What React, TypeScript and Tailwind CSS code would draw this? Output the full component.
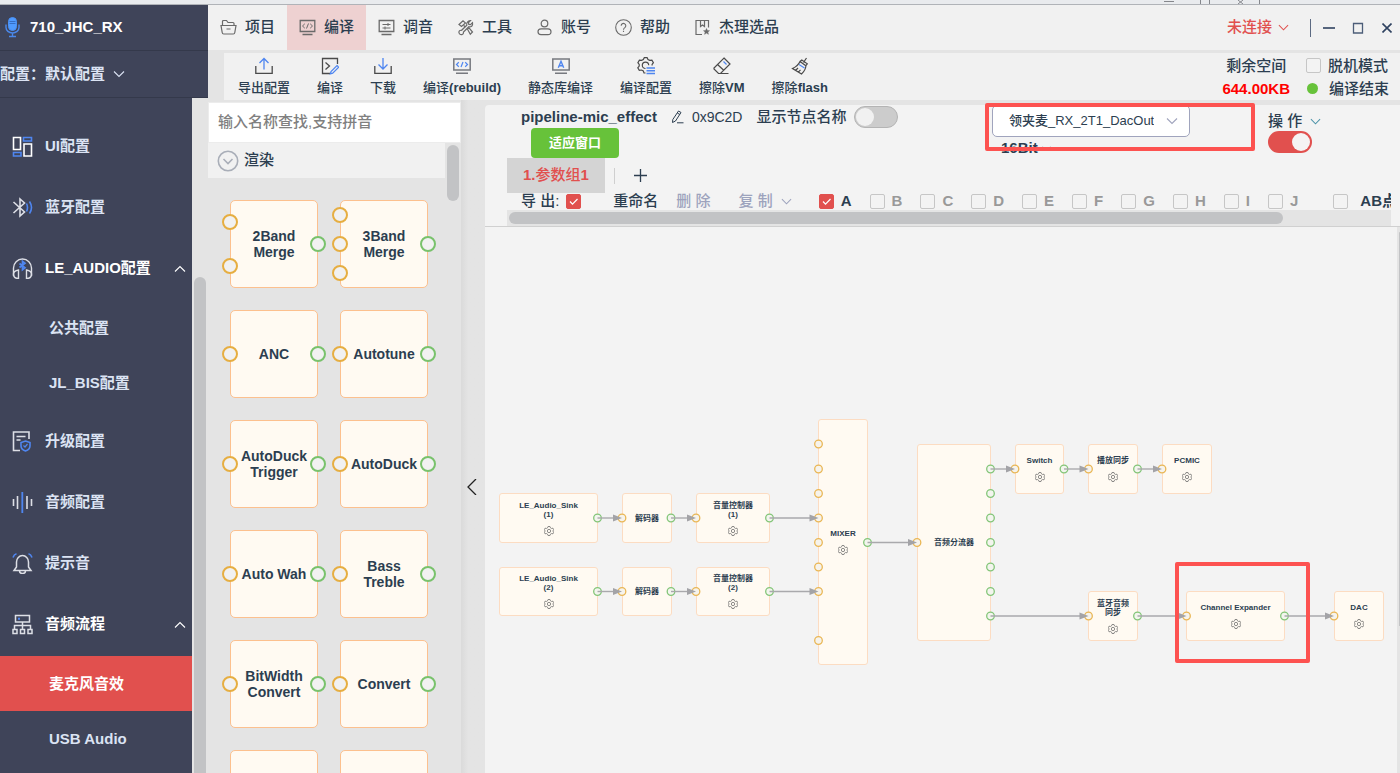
import React from "react";

type IconProps = { className?: string };

function Icon({ className = "", box = "0 0 24 24", children }: { className?: string; box?: string; children: React.ReactNode }) {
  return (
    <svg viewBox={box} className={`shrink-0 ${className}`} fill="none" stroke="currentColor" strokeWidth="1.6" aria-hidden="true">
      {children}
    </svg>
  );
}

const BLUE = "#4f86f0";

const Chevron = ({ className = "" }: IconProps) => (
  <Icon className={className} box="0 0 12 12">
    <path d="M1 3.5 6 8.5 11 3.5" strokeWidth="1.1" />
  </Icon>
);

/* Title and sidebar icons */
const MicIcon = () => (
  <Icon className="h-[21px] w-[15px]" box="0 0 15 21">
    <rect x="3.5" y="0.5" width="8" height="13" rx="4" fill="#4f9bff" stroke="#4a90f5" strokeWidth="1" />
    <path d="M4.5 4.500h6M4.500 6.500h6" stroke="#2f62b8" strokeWidth="0.800" />
    <path d="M1 7.500v3a6.500 5.500 0 0 0 13 0v-3M7.500 16v3M4 19.500h7" stroke="#4a88ea" strokeWidth="1.400" />
  </Icon>
);
const LayoutIcon = () => (
  <Icon className="size-[21px]" box="0 0 21 21">
    <path d="M1.500 1.500h7v12h-7zM12 8h7.500v12H12z" stroke="#fff" />
    <path d="M11.500 1.500h8v3.500h-8zM1.500 16.500h7.500V20H1.500z" stroke={BLUE} />
  </Icon>
);
const BluetoothIcon = () => (
  <Icon className="size-[21px]" box="0 0 21 21">
    <path d="M1.500 5 12.500 15 8 19V2l4.500 4L1.500 16" />
    <path d="M14.500 6.500q2 4 0 8M17.500 4.500q4 6 0 12" stroke={BLUE} />
  </Icon>
);
const HeadsetIcon = () => (
  <Icon className="size-[21px]" box="0 0 21 21">
    <path d="M1.500 18V10a9 9 0 0 1 18 0v8" strokeWidth="1.400" />
    <path d="M6.500 12v8.500C3 20.500 1.500 18.500 1.500 16S3.500 12.500 6.500 12zM14.500 12v8.500c3.500 0 5-2 5-4.500s-2-3.500-5-4z" strokeWidth="1.400" />
    <path d="M7.500 5.500 13 9.800l-2.500 2V3.200l2.500 2L7.500 9.500" stroke={BLUE} strokeWidth="1.700" />
  </Icon>
);
const UpgradeIcon = () => (
  <Icon className="size-[21px]" box="0 0 21 21">
    <path d="M8 19.500H1.500V1H17v7M4.500 5.500h9M4.500 9h4" />
    <path d="m13.500 10 4.500 1.500V15c0 2.500-1.800 4-4.500 5-2.700-1-4.500-2.500-4.500-5v-3.500z" stroke={BLUE} />
    <path d="m11.500 14.500 1.500 1.500 2.500-3" stroke={BLUE} strokeWidth="1.200" />
  </Icon>
);
const WaveIcon = () => (
  <Icon className="size-[21px]" box="0 0 21 21">
    <path d="M1.500 7v7M5.500 4v13M15 4v13M19.500 7v7" />
    <path d="M10.300 0v21" stroke={BLUE} strokeWidth="1.800" />
  </Icon>
);
const BellIcon = () => (
  <Icon className="size-[21px]" box="0 0 21 21">
    <path d="M2 17.500h17l-2.500-3.500V9a6 6.500 0 0 0-12 0v5zM7.500 18a3 2.500 0 0 0 6 0" strokeWidth="1.500" />
    <path d="M1 4.500Q2 1.500 4.500.8M20 4.500Q19 1.500 16.500.8" stroke={BLUE} />
  </Icon>
);
const FlowIcon = () => (
  <Icon className="size-[21px]" box="0 0 21 21">
    <path d="M3.500 1.500h14v6.500h-14zM10.500 8v7M2.500 15v-3.500h16V15" strokeWidth="1.500" />
    <path d="M1 15.500h4v4H1zM8.500 15.500h4v4h-4zM16 15.500h4v4h-4z" strokeWidth="1.500" />
    <path d="M6 4.700h2" stroke={BLUE} strokeWidth="2" />
  </Icon>
);

/* Menu icons */
const FolderIcon = () => (
  <Icon className="size-[17px]" box="0 0 17 17">
    <path d="M2.500 6.500v-4q0-1 1-1h3l1.500 2h5q1 0 1 1v2M1 6.500h15l-1.200 7q-.2 1.500-1.500 1.500H3.700q-1.300 0-1.500-1.500zM6.500 10h4" strokeWidth="1.200" />
  </Icon>
);
const CodeScreenIcon = () => (
  <Icon className="size-[17px]" box="0 0 17 17">
    <path d="M1.200 1.500h14.600v11H1.200zM3.500 15.500h10" strokeWidth="1.300" />
    <path d="M5.800 4.800 3.500 7l2.300 2.200M11.200 4.800 13.500 7l-2.300 2.200M9.500 4.500 7.500 9.500" strokeWidth="1" />
  </Icon>
);
const TuneIcon = () => (
  <Icon className="size-[17px]" box="0 0 17 17">
    <path d="M1.200 1.500h14.600v11H1.200zM3.500 15.500h10" strokeWidth="1.300" />
    <path d="M4.500 5.500h8M10 4v3M4.500 9h8M7 7.500v3" strokeWidth="1" />
  </Icon>
);
const ToolsIcon = () => (
  <Icon className="size-[17px]" box="0 0 17 17">
    <path d="M2 5.500 6 1.800 8.500 4 4.500 7.500zM6.800 6.500l1.500 1.700M10.500 10.200l1.500-1.400 3.500 4.200-2.200 2.200z" strokeWidth="1.200" />
    <path d="m13.500 1.700-2 2 .3 1.700 1.700.3 2-2q.5 2.300-.8 3.600-1.300 1-2.900.5l-5.300 5.200q.2 2-1.200 2.500t-2.800-.6q-1-1.300-.4-2.600.7-1.200 2.500-1L9.800 6.200q-.500-1.700.6-3 1.300-1.700 3.100-1.500z" strokeWidth="1.200" />
  </Icon>
);
const UserIcon = () => (
  <Icon className="size-[17px]" box="0 0 17 17">
    <circle cx="8.500" cy="4.500" r="3.300" strokeWidth="1.200" />
    <path d="M5 9.800h7q3 0 3 2.900t-3 2.900H5q-3 0-3-2.900t3-2.900z" strokeWidth="1.200" />
  </Icon>
);
const HelpIcon = () => (
  <Icon className="size-[17px]" box="0 0 17 17">
    <circle cx="8.500" cy="8.500" r="7.800" strokeWidth="1.100" />
    <path d="M6.200 6.800a2.300 2.300 0 1 1 3.600 1.800q-1.300.8-1.300 2.200M8.500 11.800v1.300" strokeWidth="1.100" />
  </Icon>
);
const BookmarkIcon = () => (
  <Icon className="size-[17px]" box="0 0 17 17">
    <path d="M8 15.500H2V1.500h12.500v7M6.500 1.500v6L8.500 6l2 1.500v-6" strokeWidth="1.200" />
    <path d="m12.500 9.500.9 2 2.100.2-1.600 1.400.5 2.200-1.900-1.200-1.900 1.200.5-2.200-1.600-1.400 2.100-.2z" fill="currentColor" strokeWidth="0.500" />
  </Icon>
);

/* Toolbar icons */
const UploadIcon = () => (
  <Icon className="size-[18px]" box="0 0 18 18">
    <path d="M.800 9v7.300h16.400V9" strokeWidth="1.300" />
    <path d="M9 12.500V1.500M4.500 6 9 1.500 13.500 6" stroke={BLUE} strokeWidth="1.300" />
  </Icon>
);
const DownloadIcon = () => (
  <Icon className="size-[18px]" box="0 0 18 18">
    <path d="M.800 9v7.300h16.400V9" strokeWidth="1.300" />
    <path d="M9 1v11M4.500 7.500 9 12l4.500-4.500" stroke={BLUE} strokeWidth="1.300" />
  </Icon>
);
const CompileIcon = () => (
  <Icon className="size-[18px]" box="0 0 18 18">
    <path d="M9 16.500H1.500v-15h15V7M4.500 5.500l4 3.500-4 3.500" strokeWidth="1.300" />
    <path d="m16 8.500 1.700 1.700-6 6-2.400.7.700-2.400z" stroke={BLUE} strokeWidth="1.200" />
  </Icon>
);
const RebuildIcon = () => (
  <Icon className="size-[18px]" box="0 0 18 18">
    <path d="M.800 2h16.400v11H.800zM3 16.300h12" stroke="#77797f" strokeWidth="1.500" />
    <path d="M5.800 5.300 3.500 7.500l2.300 2.200M12.200 5.300l2.300 2.200-2.300 2.200M10 5 8 10" stroke={BLUE} strokeWidth="1.200" />
  </Icon>
);
const StaticLibIcon = () => (
  <Icon className="size-[18px]" box="0 0 18 18">
    <path d="M.800 2h16.400v11H.800zM3 16.300h12" stroke="#77797f" strokeWidth="1.500" />
    <path d="M6.300 10.700 9 4.300l2.700 6.400M7.200 8.700h3.600" stroke={BLUE} strokeWidth="1.400" />
  </Icon>
);
const GearListIcon = () => (
  <Icon className="size-[18px]" box="0 0 18 18">
    <path d="M8.500 16H7l-.7-2-1.800-1-2.200.3-1.500-2.500L2.200 9V7.500L.900 5.700l1.500-2.500 2.200.2L6.300 2.500 7.300.7h2.800l.9 1.800 1.700.9 2.200-.2 1.500 2.500-1.300 1.800v1" strokeWidth="1.200" />
    <path d="M8.500 11.500a3.200 3.200 0 1 1 3.200-3.200" strokeWidth="1.200" />
    <path d="M9.500 11h8.500M9.500 13.700h8.500M9.500 16.400h8.500" stroke={BLUE} strokeWidth="1.500" />
  </Icon>
);
const EraserIcon = () => (
  <Icon className="size-[18px]" box="0 0 18 18">
    <path d="M11 1 17 7 7.500 16.500H5.500L1 12V11zM4.500 7.500l6.500 6M6.500 16.500h9" strokeWidth="1.200" />
    <path d="m10.500 4.500 3 3" stroke={BLUE} strokeWidth="1.200" />
  </Icon>
);
const BroomIcon = () => (
  <Icon className="size-[18px]" box="0 0 18 18">
    <path d="M12.500 5.500 15.500 1M9 4.500l5.500 4M9 4.500Q7 9 1.500 11.500L10.500 17q4-3.500 4.500-8.500l1.300-1.700-5.500-3.700zM4.500 13.500 7 11M7.300 15.200 9.500 12.800" strokeWidth="1.200" />
    <path d="m8 7.500 5.500 3.500" stroke={BLUE} strokeWidth="1.200" />
  </Icon>
);
const PencilIcon = () => (
  <Icon className="h-[14px] w-[13px]" box="0 0 13 14">
    <path d="M7.500 1 10 2.500 4.500 11 1.500 12.500l.300-3zM6.300 3 8.800 4.500M6 12.800h6.500" strokeWidth="1" />
  </Icon>
);
const GearIcon = () => (
  <Icon className="size-[10px] text-[#6b6b6b]" box="0 0 20 20">
    <path d="M8 1h4l1 2.800 2 1.100 3-.5 1.500 3.200L17.500 10l2 2.400L18 15.600l-3-.5-2 1.100L12 19H8l-1-2.800-2-1.100-3 .5L.500 12.400l2-2.400-2-2.400L2 4.400l3 .5 2-1.100z" strokeWidth="1.500" />
    <circle cx="10" cy="10" r="3.300" strokeWidth="1.500" />
  </Icon>
);

const menus = [
  { label: "项目", icon: <FolderIcon /> },
  { label: "编译", icon: <CodeScreenIcon />, active: true },
  { label: "调音", icon: <TuneIcon /> },
  { label: "工具", icon: <ToolsIcon /> },
  { label: "账号", icon: <UserIcon /> },
  { label: "帮助", icon: <HelpIcon /> },
  { label: "杰理选品", icon: <BookmarkIcon /> },
];

const tools = [
  { label: "导出配置", icon: <UploadIcon /> },
  { label: "编译", icon: <CompileIcon /> },
  { label: "下载", icon: <DownloadIcon /> },
  { label: "编译", suffix: "(rebuild)", icon: <RebuildIcon /> },
  { label: "静态库编译", icon: <StaticLibIcon /> },
  { label: "编译配置", icon: <GearListIcon /> },
  { label: "擦除", suffix: "VM", icon: <EraserIcon /> },
  { label: "擦除", suffix: "flash", icon: <BroomIcon /> },
];

type NavEntry = { label: string; icon: React.ReactNode; children?: string[] };
const nav: NavEntry[] = [
  { label: "UI配置", icon: <LayoutIcon /> },
  { label: "蓝牙配置", icon: <BluetoothIcon /> },
  { label: "LE_AUDIO配置", icon: <HeadsetIcon />, children: ["公共配置", "JL_BIS配置"] },
  { label: "升级配置", icon: <UpgradeIcon /> },
  { label: "音频配置", icon: <WaveIcon /> },
  { label: "提示音", icon: <BellIcon /> },
  { label: "音频流程", icon: <FlowIcon />, children: ["麦克风音效", "USB Audio"] },
];
const activeNav = "麦克风音效";

/* Library blocks: vertical position of each input port, in pixels from the top of the card */
const blocks = [
  { name: "2Band Merge", inputs: [22, 66] },
  { name: "3Band Merge", inputs: [15, 44, 73] },
  { name: "ANC", inputs: [44] },
  { name: "Autotune", inputs: [44] },
  { name: "AutoDuck Trigger", inputs: [44] },
  { name: "AutoDuck", inputs: [44] },
  { name: "Auto Wah", inputs: [44] },
  { name: "Bass Treble", inputs: [44] },
  { name: "BitWidth Convert", inputs: [44] },
  { name: "Convert", inputs: [44] },
  { name: "", inputs: [44] },
  { name: "", inputs: [44] },
];

/* Canvas: positions are relative to the top left corner of the canvas */
type FlowNode = { lines: string[]; x: number; y: number; w: number; h: number; gear?: boolean };
const flowNodes: FlowNode[] = [
  { lines: ["LE_Audio_Sink", "(1)"], x: 14, y: 266, w: 99, h: 50, gear: true },
  { lines: ["解码器"], x: 137, y: 266, w: 50, h: 50 },
  { lines: ["音量控制器", "(1)"], x: 211, y: 266, w: 74, h: 50, gear: true },
  { lines: ["LE_Audio_Sink", "(2)"], x: 14, y: 340, w: 99, h: 49, gear: true },
  { lines: ["解码器"], x: 137, y: 340, w: 50, h: 49 },
  { lines: ["音量控制器", "(2)"], x: 211, y: 340, w: 74, h: 49, gear: true },
  { lines: ["MIXER"], x: 333, y: 192, w: 50, h: 246, gear: true },
  { lines: ["音频分流器"], x: 432, y: 217, w: 74, h: 197 },
  { lines: ["Switch"], x: 530, y: 217, w: 49, h: 50, gear: true },
  { lines: ["播放同步"], x: 603, y: 217, w: 50, h: 50, gear: true },
  { lines: ["PCMIC"], x: 677, y: 217, w: 50, h: 50, gear: true },
  { lines: ["蓝牙音频", "同步"], x: 603, y: 364, w: 50, h: 50, gear: true },
  { lines: ["Channel Expander"], x: 701, y: 364, w: 99, h: 50, gear: true },
  { lines: ["DAC"], x: 849, y: 364, w: 50, h: 50, gear: true },
];
const inPorts = [
  [137, 291], [211, 291], [137, 364.500], [211, 364.500],
  [333.500, 217], [333.500, 242], [333.500, 266.500], [333.500, 291], [333.500, 315.500], [333.500, 340], [333.500, 364.500], [333.500, 413.500],
  [432, 315.500], [530, 242], [603.500, 242], [677, 242], [603.500, 389], [701.500, 389], [849, 389],
];
const outPorts = [
  [112.500, 291], [186, 291], [284.500, 291], [112.500, 364.500], [186, 364.500], [284.500, 364.500], [382.500, 315.500],
  [505.500, 242], [505.500, 266.500], [505.500, 291], [505.500, 315.500], [505.500, 340], [505.500, 364.500], [505.500, 389],
  [579, 242], [652.500, 242], [652.500, 389], [799.500, 389],
];
const wires = [
  [112.500, 137, 291], [186, 211, 291], [284.500, 333.500, 291],
  [112.500, 137, 364.500], [186, 211, 364.500], [284.500, 333.500, 364.500],
  [382.500, 432, 315.500], [505.500, 530, 242], [579, 603.500, 242], [652.500, 677, 242],
  [505.500, 603.500, 389], [652.500, 701.500, 389], [799.500, 849, 389],
];

function CheckBox({ label, checked, muted, hideLabel, wide }: { label: string; checked?: boolean; muted?: boolean; hideLabel?: boolean; wide?: boolean }) {
  return (
    <label className={`flex shrink-0 items-center whitespace-nowrap ${wide ? "gap-3" : "gap-[7px]"} ${muted ? "text-[#999999]" : ""}`}>
      <span className="relative block size-[15px]">
        <input
          type="checkbox"
          defaultChecked={checked}
          aria-label={label}
          className="peer block size-[15px] appearance-none rounded-xs border border-[#c6c6c6] bg-[#f3f3f3] checked:border-[#e1504e] checked:bg-[#e1504e]"
        />
        <svg viewBox="0 0 15 15" className="pointer-events-none absolute inset-0 hidden peer-checked:block" fill="none" stroke="#fff" strokeWidth="1.200">
          <path d="m4 7.500 2.500 2.700L11.500 5" />
        </svg>
      </span>
      {!hideLabel && <span>{label}</span>}
    </label>
  );
}

function Sidebar() {
  return (
    <aside className="flex w-[208px] shrink-0 flex-col">
      <div className="flex h-[46px] shrink-0 items-center gap-[10px] border-b border-[#34394b] bg-[#3f4459] pl-[5px] text-[15px] font-bold text-white">
        <MicIcon />
        710_JHC_RX
      </div>
      <button className="flex h-[47px] shrink-0 items-center border-b border-[#34394b] bg-[#3f4459] text-[15px] font-bold text-[#dbe3f3]">
        <span>配置：</span>
        <span className="pr-2">默认配置</span>
        <Chevron className="size-3" />
      </button>
      <div className="flex min-h-0 flex-1">
        <nav className="min-w-0 flex-1 overflow-hidden bg-[#3f4459] pt-[18px] text-[15px] font-bold text-[#dbe3f3]">
          {nav.map((entry) => (
            <div key={entry.label}>
              <a href="#" className={`flex h-[61px] items-center gap-3 pr-[6px] pl-3 ${entry.children ? "text-white" : ""}`}>
                <span className="text-[#dddfe6]">{entry.icon}</span>
                <span className="flex-1">{entry.label}</span>
                {entry.children && <Chevron className="size-3 rotate-180" />}
              </a>
              {entry.children && (
                <div className="py-px">
                  {entry.children.map((child) => (
                    <a
                      key={child}
                      href="#"
                      className={`flex h-[55px] items-center pt-px pl-[49px] ${child === activeNav ? "bg-[#e1504e] text-white" : ""}`}
                    >
                      {child}
                    </a>
                  ))}
                </div>
              )}
            </div>
          ))}
        </nav>
        <div className="flex w-4 flex-col px-[2px] pt-[179px]">
          <div className="flex-1 rounded-t-full bg-[#c2c3c5]" />
        </div>
      </div>
    </aside>
  );
}

function MenuBar() {
  return (
    <header className="flex h-[45px] shrink-0 items-stretch bg-[#f1f1f1] text-[15px] font-medium">
      {menus.map((m) => (
        <button key={m.label} className={`flex items-center gap-2 px-3 whitespace-nowrap ${m.active ? "bg-[#eed1d1]" : ""}`}>
          <span className="text-[#6a6a6a]">{m.icon}</span>
          {m.label}
        </button>
      ))}
      <div className="ml-auto flex items-center pr-2">
        <button className="flex items-center gap-[6px] pr-[21px] text-[#e1504e]">
          未连接
          <Chevron className="size-[11px]" />
        </button>
        <span className="h-[18px] w-px bg-[#5c6a82]" />
        <button aria-label="最小化" className="pl-3">
          <Icon className="size-3" box="0 0 12 12"><path d="M0 6h12" stroke="#2f4260" /></Icon>
        </button>
        <button aria-label="最大化" className="pl-[17px]">
          <Icon className="size-3" box="0 0 12 12"><path d="M1.500 1.500h9v9.500h-9z" stroke="#4c5d78" strokeWidth="1.300" /></Icon>
        </button>
        <button aria-label="关闭" className="pl-[18px]">
          <Icon className="size-[10px]" box="0 0 10 10"><path d="m.500.500 9 9M9.500.500l-9 9" stroke="#2f4260" /></Icon>
        </button>
      </div>
    </header>
  );
}

function Toolbar() {
  return (
    <div className="mt-[3px] ml-4 flex h-[47px] shrink-0 items-center bg-[#f1f1f1] pr-[11px] pl-[14px] font-medium">
      <div className="flex gap-[27px] text-[13px] leading-5">
        {tools.map((t) => (
          <button key={t.label + (t.suffix ?? "")} className="flex flex-col items-center gap-[3px] pt-px whitespace-nowrap">
            <span className="text-[#4a4a4a]">{t.icon}</span>
            <span>
              {t.label}
              {t.suffix && <b>{t.suffix}</b>}
            </span>
          </button>
        ))}
      </div>
      <div className="ml-auto flex gap-4 text-[15px] leading-[23px]">
        <div className="flex flex-col items-center">
          <span>剩余空间</span>
          <span className="font-bold text-[#ff0000]">644.00KB</span>
        </div>
        <div className="flex flex-col">
          <CheckBox label="脱机模式" />
          <div className="flex items-center gap-[11px] pl-px">
            <span className="size-[11px] rounded-full bg-[#67c23a]" />
            编译结束
          </div>
        </div>
      </div>
    </div>
  );
}

function Library() {
  return (
    <section className="flex w-[253px] shrink-0 flex-col pt-[2px]">
      <input
        type="text"
        aria-label="查找节点"
        placeholder="输入名称查找,支持拼音"
        className="h-[41px] w-full shrink-0 border border-[#ececec] bg-white px-[9px] pb-[2px] text-[15px] font-medium placeholder:text-[#808080] placeholder:opacity-100"
      />
      <div className="flex min-h-0 flex-1">
        <div className="min-w-0 flex-1 overflow-hidden">
          <button className="flex h-[35px] w-full items-center gap-[5px] bg-[#f1f1f1] pl-[9px] text-[15px] font-medium">
            <Icon className="size-[22px] text-[#a9aeb8]" box="0 0 22 22">
              <circle cx="11" cy="11" r="9.700" />
              <path d="M6.500 9 11 13.500 15.500 9" />
            </Icon>
            渲染
          </button>
          <div className="grid grid-cols-[88px_88px] gap-[22px] py-[22px] pl-[22px]">
            {blocks.map((b, i) => (
              <button
                key={i}
                className="relative flex h-[88px] items-center justify-center rounded-[5px] border border-[#fcc08e] bg-[#fffaf2] px-2 text-center text-sm leading-4 font-bold"
              >
                {b.name}
                {b.inputs.map((y) => (
                  <span key={y} style={{ top: y - 9 }} className="absolute -left-[9px] size-4 rounded-full border-2 border-[#e6ae41] bg-[#f1f1f1]" />
                ))}
                <span className="absolute top-[35px] -right-[9px] size-4 rounded-full border-2 border-[#79c26c] bg-[#f1f1f1]" />
              </button>
            ))}
          </div>
        </div>
        <div className="w-4 px-[2px] pt-[2px]">
          <div className="h-14 rounded-full bg-[#c2c3c5]" />
        </div>
      </div>
    </section>
  );
}

function PipelineHeader() {
  return (
    <div className="shrink-0 overflow-hidden border-b border-[#d0d0d0] pr-[9px] pl-[22px] text-[15px] font-medium">
      <div className="flex h-[53px] items-start pl-[14px]">
        <div className="flex-1">
          <div className="flex h-[23px] items-center pt-px whitespace-nowrap">
            <span className="font-bold">pipeline-mic_effect</span>
            <button aria-label="重命名" className="pl-[14px]"><PencilIcon /></button>
            <span className="pl-2 text-sm">0x9C2D</span>
            <label className="flex items-center gap-2 pl-[14px]">
              显示节点名称
              <input
                type="checkbox"
                className="relative h-[22px] w-11 appearance-none rounded-full border border-[#b4b4b4] bg-[#cccccc] before:absolute before:top-px before:left-px before:size-[18px] before:rounded-full before:bg-[#f1f1f1]"
              />
            </label>
          </div>
          <button className="ml-[10px] h-[30px] rounded-sm bg-[#67c23a] px-[18px] text-[13px] font-bold text-white">适应窗口</button>
        </div>
        <div className="relative h-[53px] w-[276px]">
          <div className="relative w-[198px]">
            <select
              aria-label="音频配置方案"
              className="block h-8 w-full appearance-none overflow-hidden rounded-[5px] border border-[#a0a4bd] bg-white pr-[35px] pl-4 text-[13px] font-medium"
            >
              <option>领夹麦_RX_2T1_DacOut</option>
            </select>
            <Chevron className="pointer-events-none absolute top-[10px] right-3 size-3 text-[#a0a4bd]" />
          </div>
          <button className="flex items-center gap-1 pt-[2px] pl-[9px] leading-[18px] font-bold">
            16Bit
            <Chevron className="size-[9px] text-[#8a93a3]" />
          </button>
        </div>
        <div className="w-[123px]">
          <button className="flex h-[26px] items-center gap-2 pt-[6px] whitespace-nowrap">
            操 作
            <Chevron className="size-[11px] text-[#4c93a8]" />
          </button>
          <input
            type="checkbox"
            aria-label="启用"
            defaultChecked
            className="relative block h-[22px] w-11 appearance-none rounded-full bg-[#e1504e] before:absolute before:top-[2px] before:right-[2px] before:size-[18px] before:rounded-full before:bg-[#f5f3f3]"
          />
        </div>
      </div>
      <div className="flex h-[35px] items-center">
        <button className="h-[35px] bg-[#d4d4d4] px-4 text-[#e1504e]">
          <b>1.</b>参数组<b>1</b>
        </button>
        <span className="ml-[9px] h-4 w-px bg-[#cfcfcf]" />
        <button aria-label="添加参数组" className="pl-[19px]">
          <Icon className="size-[13px]" box="0 0 13 13"><path d="M6.500 0v13M0 6.500h13" strokeWidth="1.300" /></Icon>
        </button>
      </div>
      <div className="flex h-[17px] items-center overflow-hidden pl-[14px] whitespace-nowrap">
        <span className="pr-[7px]">导 出:</span>
        <CheckBox label="导出" checked hideLabel />
        <button className="pl-8">重命名</button>
        <button className="pl-[18px] text-[#9da3bd]">删 除</button>
        <button className="flex items-center gap-2 pl-[28px] text-[#9da3bd]">
          复 制
          <Chevron className="size-[11px]" />
        </button>
        <div className="flex gap-[18px] pl-[27px] font-bold">
          {"ABCDEFGHIJ".split("").map((c) => (
            <CheckBox key={c} label={c} checked={c === "A"} muted={c !== "A"} />
          ))}
          <div className="pl-[17px]">
            <CheckBox label="AB点" wide />
          </div>
        </div>
      </div>
      <div className="h-4 bg-[#e4e4e4] px-[2px] pt-[2px]">
        <div className="h-3 w-[88%] rounded-full bg-[#c2c3c5]" />
      </div>
    </div>
  );
}

function Canvas() {
  return (
    <div className="flex min-h-0 flex-1">
      <div className="relative min-w-0 flex-1 overflow-hidden">
        {flowNodes.map((n) => (
          <div
            key={`${n.x}-${n.y}`}
            style={{ left: n.x, top: n.y, width: n.w, height: n.h }}
            className="absolute flex flex-col items-center justify-center gap-[7px] rounded-[3px] border border-[#fcdcc2] bg-[#fffaf2] text-center text-[8px] leading-[9px] font-bold whitespace-nowrap"
          >
            <div>
              {n.lines.map((l) => (
                <div key={l}>{l}</div>
              ))}
            </div>
            {n.gear && (
              <button aria-label="设置">
                <GearIcon />
              </button>
            )}
          </div>
        ))}
        <svg className="pointer-events-none absolute inset-0 size-full" fill="none">
          {inPorts.map(([x, y]) => (
            <circle key={`${x}-${y}`} cx={x} cy={y} r="3.800" fill="#f6f3ec" stroke="#e9b654" strokeWidth="1.300" />
          ))}
          {outPorts.map(([x, y]) => (
            <circle key={`${x}-${y}`} cx={x} cy={y} r="3.800" fill="#f3f5ee" stroke="#83c578" strokeWidth="1.300" />
          ))}
          {wires.map(([a, b, y]) => (
            <g key={`${a}-${y}`}>
              <path d={`M${a} ${y}H${b - 6}`} stroke="#a9a9ac" strokeWidth="1.400" />
              <path d={`M${b} ${y}l-9-3.600v7.200z`} fill="#a3a3a7" />
            </g>
          ))}
        </svg>
        <div className="pointer-events-none absolute top-[335px] left-[690px] h-[101px] w-[135px] rounded-xs border-4 border-[#fd5250]" />
      </div>
      <div className="w-[3px] bg-[#e4e4e4] pt-[5px] pl-[2px]">
        <div className="h-[394px] rounded-t-sm bg-[#c2c3c5]" />
      </div>
    </div>
  );
}

export default function App() {
  return (
    <div className="flex h-screen flex-col overflow-hidden bg-[#e4e4e4] font-['Liberation_Sans','Noto_Sans_CJK_SC',sans-serif] text-[#2c3e50]">
      <div className="flex h-[5px] shrink-0 justify-end border-b border-[#b0b3b8] bg-[#e9ebee] pr-[138px]">
        <svg className="h-1 w-[100px]" viewBox="0 0 100 4" fill="none" stroke="#85878c">
          <path d="M2 1.500h10M38.500 0v4M47.500 0v4M97.500 0v4M76 4l5-4M76 0l5 4" />
        </svg>
      </div>
      <div className="flex min-h-0 flex-1">
        <Sidebar />
        <div className="flex min-w-0 flex-1 flex-col">
          <MenuBar />
          <Toolbar />
          <div className="flex min-h-0 flex-1">
            <Library />
            <div className="flex w-6 shrink-0 items-center bg-linear-to-r from-[#dadada] to-[#e4e4e4] to-30% pt-[100px]">
              <button aria-label="收起" className="pl-[6px]">
                <Icon className="h-4 w-[10px]" box="0 0 10 16"><path d="M9 0 1 8l8 8" stroke="#222" strokeWidth="1.300" /></Icon>
              </button>
            </div>
            <main className="relative mt-[5px] flex min-w-0 flex-1 flex-col rounded-tl-sm bg-[#f3f3f3]">
              <PipelineHeader />
              <Canvas />
              <div className="pointer-events-none absolute -top-[2px] right-[145px] h-[48px] w-[270px] rounded-xs border-4 border-[#fd5250]" />
            </main>
          </div>
        </div>
      </div>
    </div>
  );
}
